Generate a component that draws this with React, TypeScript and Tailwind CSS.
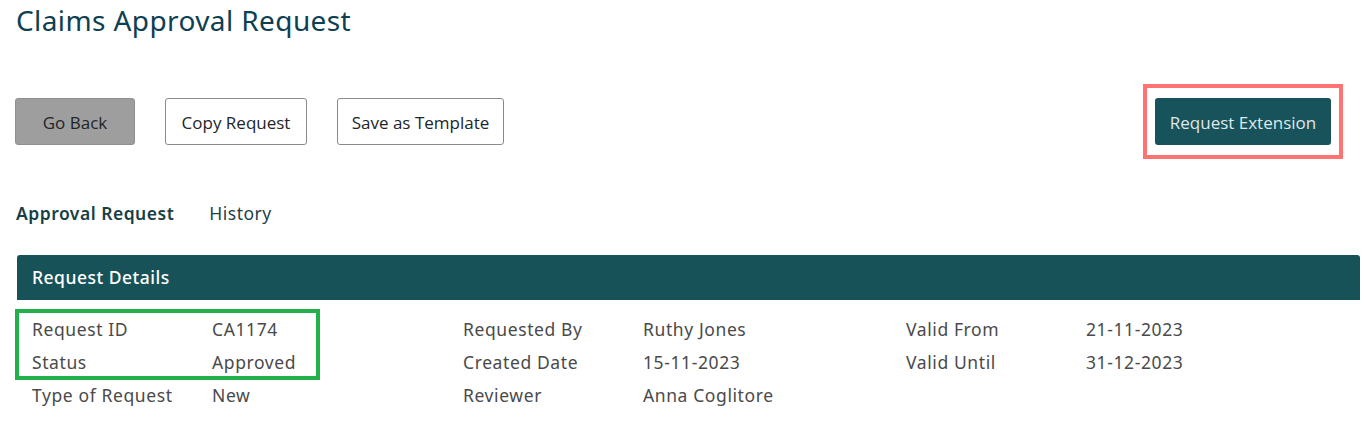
import React from "react";

const poppins = { fontFamily: "'Noto Sans', 'Open Sans', sans-serif" } as const;
const segoe = { fontFamily: "'Open Sans', 'Noto Sans', sans-serif" } as const;

type Field = { label: string; value: string };

const columns: Field[][] = [
  [
    { label: "Request ID", value: "CA1174" },
    { label: "Status", value: "Approved" },
    { label: "Type of Request", value: "New" },
  ],
  [
    { label: "Requested By", value: "Ruthy Jones" },
    { label: "Created Date", value: "15-11-2023" },
    { label: "Reviewer", value: "Anna Coglitore" },
  ],
  [
    { label: "Valid From", value: "21-11-2023" },
    { label: "Valid Until", value: "31-12-2023" },
  ],
];

function DetailRow({ label, value }: Field) {
  return (
    <div className="flex h-[33px] items-center">
      <div className="w-[180px] shrink-0">{label}</div>
      <div>{value}</div>
    </div>
  );
}

export default function App() {
  return (
    <div className="h-[434px] w-[1370px] overflow-hidden bg-white" style={poppins}>
      {/* TITLE */}
      <h1 className="pl-4 pt-[2px] text-[28px] leading-[36px] tracking-[0.4px] text-[#0e3f52]">
        Claims Approval Request
      </h1>

      {/* ACTIONS */}
      <div
        className="mt-[60px] flex items-center justify-between pl-[15px] pr-[27px] text-[17px] text-[#212529]"
        style={segoe}
      >
        <div className="flex gap-[30px]">
          <button className="h-[47px] w-[120px] rounded-[3px] border border-[#8f8f8f] bg-[#9e9e9e] pt-[3px]">
            Go Back
          </button>
          <button className="h-[47px] w-[142px] rounded-[3px] border border-[#8a8a8a] bg-white pt-[3px]">
            Copy Request
          </button>
          <button className="h-[47px] w-[167px] rounded-[3px] border border-[#8a8a8a] bg-white pt-[3px]">
            Save as Template
          </button>
        </div>
        <div className="-my-[14px] border-4 border-[#ff7373] px-2 py-[10px]">
          <button className="h-[47px] w-[176px] rounded-[3px] bg-[#18525a] pt-[3px] text-[#dfe8ea]">
            Request Extension
          </button>
        </div>
      </div>

      {/* TABS */}
      <div className="mt-[56px] flex gap-[35px] pl-4 text-[17.5px] leading-[24px] tracking-[0.5px]">
        <span className="font-semibold text-[#183f46]">Approval Request</span>
        <span className="text-[#1f3f4a]">History</span>
      </div>

      {/* PANEL */}
      <div className="ml-[17px] mr-[10px] mt-[30px]">
        <div className="flex h-[45px] items-center rounded-t-[3px] bg-[#185259] pl-[15px] text-[17.5px] font-medium tracking-[0.5px] text-white">
          Request Details
        </div>
        <div className="relative mt-[13px] flex text-[17.5px] tracking-[0.6px] text-[#4a4a4a]">
          <div className="pointer-events-none absolute -left-[2px] -top-[4px] h-[71px] w-[305px] border-4 border-[#22b04b]" />
          <div className="w-[431px] pl-[15px]">
            {columns[0].map((f) => (
              <DetailRow key={f.label} {...f} />
            ))}
          </div>
          <div className="w-[443px] pl-[15px]">
            {columns[1].map((f) => (
              <DetailRow key={f.label} {...f} />
            ))}
          </div>
          <div className="pl-[15px]">
            {columns[2].map((f) => (
              <DetailRow key={f.label} {...f} />
            ))}
          </div>
        </div>
      </div>
    </div>
  );
}
